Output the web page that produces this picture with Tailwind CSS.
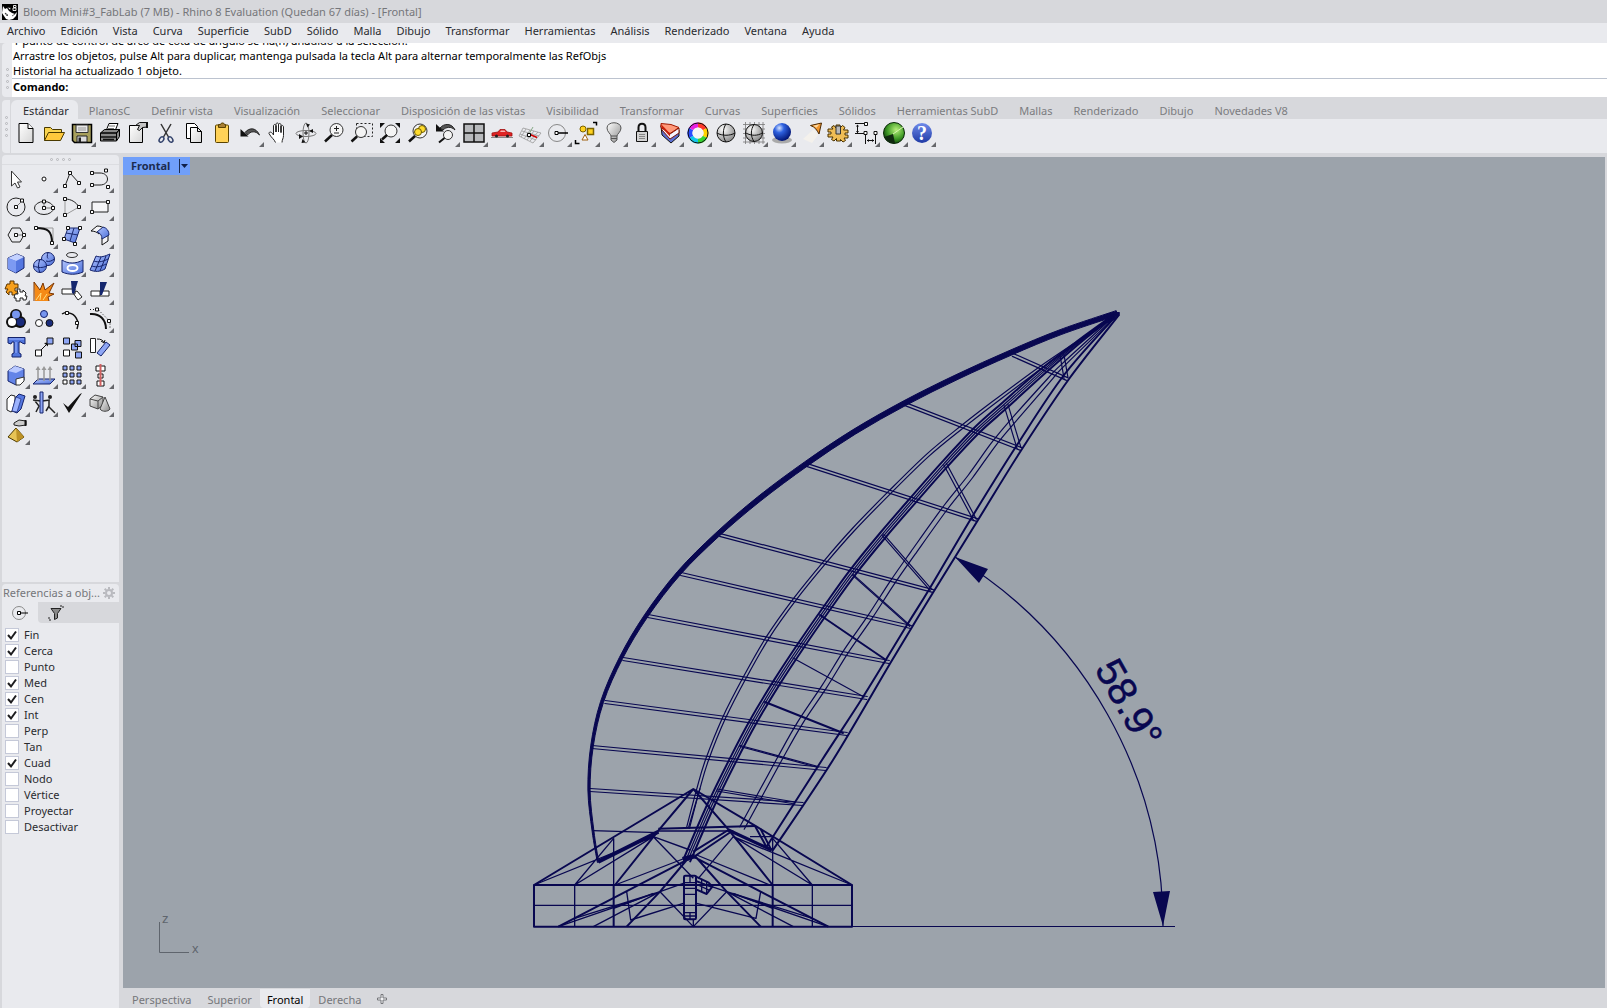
<!DOCTYPE html>
<html lang="es">

<head>
  <meta charset="UTF-8">
  <meta name="viewport" content="width=device-width, initial-scale=1.0">
  <script src="https://cdn.jsdelivr.net/npm/@tailwindcss/browser@4"></script>
  <title>Bloom Mini#3_FabLab - Rhino 8</title>
</head>

<body class="flex h-screen flex-col overflow-hidden bg-[#d7d8dc] font-['Noto_Sans','Open_Sans',sans-serif] text-[11px] leading-4 text-[#2a2b2e]">

  <!-- shared gradients -->
  <svg class="absolute size-0" aria-hidden="true">
    <defs>
      <linearGradient id="blue" x1="0" y1="0" x2="1" y2="1"><stop offset="0" stop-color="#b4c6ff"/><stop offset="1" stop-color="#4a6ed8"/></linearGradient>
      <linearGradient id="gray" x1="0" y1="0" x2="1" y2="1"><stop offset="0" stop-color="#fff"/><stop offset="1" stop-color="#8a8a8a"/></linearGradient>
      <linearGradient id="paper" x1="0" y1="0" x2="1" y2="1"><stop offset="0" stop-color="#fff"/><stop offset="1" stop-color="#d5d5d5"/></linearGradient>
      <linearGradient id="help" x1="0" y1="0" x2="0" y2="1"><stop offset="0" stop-color="#6f8bea"/><stop offset="1" stop-color="#1f3aa5"/></linearGradient>
      <radialGradient id="ball" cx=".35" cy=".3" r=".7"><stop offset="0" stop-color="#fff"/><stop offset="1" stop-color="#8f8f8f"/></radialGradient>
      <radialGradient id="blueball" cx=".35" cy=".28" r=".75"><stop offset="0" stop-color="#d6e4ff"/><stop offset=".35" stop-color="#2f62e0"/><stop offset="1" stop-color="#001270"/></radialGradient>
      <radialGradient id="greenball" cx=".6" cy=".35" r=".7"><stop offset="0" stop-color="#b6f07a"/><stop offset=".6" stop-color="#3f9a26"/><stop offset="1" stop-color="#0b3d08"/></radialGradient>
    </defs>
  </svg>

  <header>
    <div class="flex h-[23px] items-center gap-[5px] pl-[2px] text-[#75767a]">
      <svg class="size-4" viewBox="0 0 16 16">
        <path d="M0 0h16v16H0z" fill="#000"/>
        <path d="M1 2l2 3 2-1 2 3 3 2 3 1 2-2-1 4-3 3-4 1-3-1-2-3-2-3z" fill="#fff"/>
        <path d="M5 3l3 3 1-2zM3 9l3 2-1 1zM10 12l3-2" fill="#fff" stroke="#000" stroke-width=".6"/>
        <path d="M11.500 1.500h2.500v2h-2.500zM11 4h3v2.500h-3z" fill="none" stroke="#fff" stroke-width=".9"/>
      </svg>
      <h1>Bloom Mini#3_FabLab (7 MB) - Rhino 8 Evaluation (Quedan 67 días) - [Frontal]</h1>
    </div>
    <nav class="flex h-5 items-center gap-[15px] bg-[#e9eaee] pb-[5px] pl-[7px]">
      <a href="#">Archivo</a>
      <a href="#">Edición</a>
      <a href="#">Vista</a>
      <a href="#">Curva</a>
      <a href="#">Superficie</a>
      <a href="#">SubD</a>
      <a href="#">Sólido</a>
      <a href="#">Malla</a>
      <a href="#">Dibujo</a>
      <a href="#">Transformar</a>
      <a href="#">Herramientas</a>
      <a href="#">Análisis</a>
      <a href="#">Renderizado</a>
      <a href="#">Ventana</a>
      <a href="#">Ayuda</a>
    </nav>
  </header>

  <!-- command line -->
  <section class="ml-[2px] flex h-[54px] text-black">
    <div class="flex w-[10px] flex-col items-center justify-center gap-[3px] rounded-l bg-[#e9eaee] pt-4">
      <i class="size-[3px] rounded-full border border-[#b5b6ba]"></i><i class="size-[3px] rounded-full border border-[#b5b6ba]"></i><i class="size-[3px] rounded-full border border-[#b5b6ba]"></i><i class="size-[3px] rounded-full border border-[#b5b6ba]"></i>
    </div>
    <div class="flex flex-1 flex-col bg-white">
      <div class="flex h-9 flex-col justify-end overflow-hidden border-b border-[#bcc3cf] pl-px leading-[15px]">
        <p>1 punto de control de arco de cota de ángulo se ha(n) añadido a la selección.</p>
        <p>Arrastre los objetos, pulse Alt para duplicar, mantenga pulsada la tecla Alt para alternar temporalmente las RefObjs</p>
        <p>Historial ha actualizado 1 objeto.</p>
      </div>
      <div class="flex flex-1 items-center pb-[2px] pl-px">
        <label for="command" class="font-bold">Comando:</label>
        <input id="command" type="text" class="ml-1 h-4 flex-1 outline-none">
      </div>
    </div>
  </section>

  <!-- toolbar tabs + icons -->
  <section class="mt-[3px] ml-[2px] flex h-[53px]">
    <div class="flex w-[9px] flex-col items-center justify-center gap-[3px] rounded-l border-r border-[#d7d8dc] bg-[#e9eaee]">
      <i class="size-[3px] rounded-full border border-[#b5b6ba]"></i><i class="size-[3px] rounded-full border border-[#b5b6ba]"></i><i class="size-[3px] rounded-full border border-[#b5b6ba]"></i><i class="size-[3px] rounded-full border border-[#b5b6ba]"></i>
    </div>
    <div class="flex-1">
      <div class="flex h-[19px] items-center gap-[21px] text-[#7b7c80]">
        <button class="-mr-[10px] h-full rounded-t-md bg-[#e9eaee] pt-[2px] pr-[9px] pl-3 text-[#2a2b2e]">Estándar</button>
        <button class="pt-[2px]">PlanosC</button>
        <button class="pt-[2px]">Definir vista</button>
        <button class="pt-[2px]">Visualización</button>
        <button class="pt-[2px]">Seleccionar</button>
        <button class="pt-[2px]">Disposición de las vistas</button>
        <button class="pt-[2px]">Visibilidad</button>
        <button class="pt-[2px]">Transformar</button>
        <button class="pt-[2px]">Curvas</button>
        <button class="pt-[2px]">Superficies</button>
        <button class="pt-[2px]">Sólidos</button>
        <button class="pt-[2px]">Herramientas SubD</button>
        <button class="pt-[2px]">Mallas</button>
        <button class="pt-[2px]">Renderizado</button>
        <button class="pt-[2px]">Dibujo</button>
        <button class="pt-[2px]">Novedades V8</button>
      </div>
      <div id="toolbar" class="flex h-[34px] items-start bg-[#e9eaee] pl-px"></div>
    </div>
  </section>

  <div class="mt-[2px] flex min-h-0 flex-1">
    <aside class="ml-[2px] flex w-[117px] flex-col gap-[2px]">
      <div class="h-[427px] rounded-t bg-[#e9eaee]">
        <div class="flex h-[10px] items-center justify-center gap-[3px] border-b border-[#dcdde1]">
          <i class="size-[3px] rounded-full border border-[#b5b6ba]"></i><i class="size-[3px] rounded-full border border-[#b5b6ba]"></i><i class="size-[3px] rounded-full border border-[#b5b6ba]"></i><i class="size-[3px] rounded-full border border-[#b5b6ba]"></i>
        </div>
        <div id="palette" class="grid w-[112px] grid-cols-4"></div>
      </div>

      <div class="flex-1 rounded-t bg-[#e9eaee]">
        <div class="flex h-[18px] items-center justify-between pr-1 pl-px text-[#75767a]">
          <h2>Referencias a obj...</h2>
          <button aria-label="Opciones">
            <svg class="size-3" viewBox="0 0 12 12"><circle cx="6" cy="6" r="3" fill="none" stroke="#b9babf" stroke-width="2"/><path d="M6 0v2M6 10v2M0 6h2M10 6h2M1.700 1.700l1.500 1.500M8.800 8.800l1.500 1.500M1.700 10.300l1.500-1.500M8.800 3.200l1.500-1.500" stroke="#b9babf" stroke-width="2"/></svg>
          </button>
        </div>
        <div class="flex h-[21px] bg-[#e9eaee]">
          <button class="flex w-9 items-center justify-center" aria-label="Referencias">
            <svg class="size-[18px]" viewBox="0 0 18 18" fill="none"><circle cx="8" cy="9" r="6.500" stroke="#8a8a8a"/><path d="M9.500 9H17" stroke="#000"/><path d="M6.500 7.500h3v3h-3z" fill="#fff" stroke="#000"/></svg>
          </button>
          <div class="flex flex-1 rounded-bl bg-[#d7d8dc]">
            <button class="flex w-9 items-center justify-center" aria-label="Filtro de selección">
              <svg class="size-4" viewBox="0 0 16 16"><path d="M3 3.500h10l-3.500 5v4.500l-3 1.500v-6z" fill="#888" stroke="#222"/><path d="M12 1h3v3M1 12v3h3" fill="none" stroke="#222" stroke-dasharray="2 1"/></svg>
            </button>
          </div>
        </div>
        <ul id="snaps" class="mt-1 pl-[3px]"></ul>
      </div>
    </aside>

    <main class="ml-1 flex min-w-0 flex-1 flex-col">
      <div class="relative mt-[2px] mr-[2px] min-h-0 flex-1 bg-[#9ca3ab]">
        <svg id="viewport" class="size-full" viewBox="123 157 1482 831" preserveAspectRatio="xMidYMid meet" fill="none" stroke="#080750">
          <g id="model" stroke-linecap="round" stroke-linejoin="round"></g>

          <!-- base, drawn at 3:1 -->
          <g transform="translate(520 760) scale(.33333)" stroke-width="6" stroke-linejoin="round">
            <path d="M42 375H996V500H42zM281 375V500M758 375V500"/>
            <path d="M42 375L520 87L710 200L996 375M520 87L415 212L285 375M520 87L625 208L758 375"/>
            <path d="M415 206L705 198M115 500L520 290L925 500M500 300L420 395L320 500M525 288L620 395L722 500"/>
            <path d="M625 210L520 275M632 216L525 288M705 198L740 262M722 207L755 272"/>
            <path d="M235 305L415 215" stroke-width="12"/>
            <path d="M625 210L755 270" stroke-width="10"/>
            <path d="M488 298L525 288" stroke-width="14"/>
            <g stroke-width="4">
              <path d="M42 436H996M164 375V500M877 375V500M281 235V375M758 232V375M415 213H640M218 212L415 218M690 230H755"/>
              <path d="M42 375L400 230L164 375L281 235M996 375L640 230L877 375L758 235"/>
              <path d="M400 230L520 355M640 230L535 355M400 230L510 270M520 285L285 375M530 285L750 375"/>
              <path d="M420 395L220 500M420 395L164 475M420 395L115 500M420 395L520 500L620 395M420 395L490 370M530 365L620 395M620 395L820 500M620 395L877 475M620 395L925 500"/>
              <path d="M320 395L332 480L490 430M722 395L708 475L530 430M281 445L400 400M758 445L640 400M505 205L540 85"/>
              <path d="M493 368H528M493 385H528M493 403H528M493 458H528M510 347V368M510 458V478M493 468H528M520 478V500M528 362L576 382M528 372L570 392M545 357V394M560 364V400"/>
            </g>
            <rect x="492" y="347" width="36" height="131" rx="4"/>
            <path d="M528 350L566 368L577 380L560 402L528 388z"/>
          </g>

          <!-- angle dimension -->
          <path d="M852 926.500H1175"/>
          <path d="M955 557A431 431 0 0 1 1163 926" stroke-width="1.200"/>
          <path d="M955 557L988 569L979 583zM1163 926L1153 892L1170 891z" fill="#080750" stroke="none"/>
          <text transform="translate(1094 669) rotate(60.500)" class="font-['Liberation_Sans',sans-serif] text-[40px]" fill="#080750" stroke-width=".5">58.9°</text>

          <!-- axis icon -->
          <path d="M159.500 922V952.500H189" stroke="#5f656d"/>
          <g class="font-['Liberation_Sans',sans-serif] text-[13px]" fill="#5f656d" stroke="none">
            <text x="162" y="923">z</text>
            <text x="192" y="953">x</text>
          </g>
        </svg>
        <button class="absolute top-0 left-0 flex h-[18px] items-center bg-[#709ffa] font-bold text-[#1c2c50]">
          <span class="w-[57px] border-r border-[#1c2c50] pl-2 text-left leading-[14px]">Frontal</span>
          <svg class="w-[10px]" viewBox="0 0 10 10"><path d="M1 3h7l-3.500 4z" fill="#10204a"/></svg>
        </button>
      </div>
      <div class="mt-px flex h-[19px] items-center pl-px text-[#75767a]">
        <button class="px-2 pt-[2px]">Perspectiva</button>
        <button class="px-2 pt-[2px]">Superior</button>
        <button class="h-full rounded-b bg-[#e9eaee] px-[7px] pt-[2px] text-black">Frontal</button>
        <button class="px-2 pt-[2px]">Derecha</button>
        <button class="px-2 pt-px" aria-label="Nueva vista">
          <svg class="size-[10px]" viewBox="0 0 10 10"><path d="M4 .5h2v3.500h3.500v2H6v3.500H4V6H.5V4H4z" fill="#f4f4f6" stroke="#75767a"/></svg>
        </button>
      </div>
    </main>
  </div>

  <script>
    // [label, has flyout, svg content]
    const toolbar = [
      ['Nuevo', 0, '<path d="M5 2.500h9l5 5v14H5z" fill="url(#paper)" stroke="#000"/><path d="M14 2.500v5h5" fill="#fff" stroke="#000"/>'],
      ['Abrir', 0, '<path d="M2.500 19.500v-13h6l2 2h9v3" fill="#f9d44f" stroke="#4a3a00"/><path d="M2.500 19.500l4-8h16l-4 8z" fill="#ffc93c" stroke="#4a3a00"/>'],
      ['Guardar', 1, '<path d="M2.500 3.500h19v18H4.500l-2-2z" fill="#a8a05c" stroke="#000" stroke-width="1.500"/><path d="M6 4h12v7.500H6z" fill="#e8e8e8" stroke="#333"/><path d="M7 15h10v6H7z" fill="#ddd" stroke="#222"/><path d="M8.500 16.500h2.500V21H8.500z" fill="#222"/><path d="M8 7h8M8 9h8" stroke="#999"/>'],
      ['Imprimir', 0, '<path d="M8 10l3-7.500h9L17 10z" fill="#fff" stroke="#000"/><path d="M11 5h6M10 7.500h6" stroke="#777"/><path d="M2.500 12l4-3.500h15l-3 3.500zM2.500 12h16v8h-16zM18.500 12l3-3.500v7l-3 4.500z" fill="#888" stroke="#000"/><path d="M3 16h15M5 18.500h11" stroke="#111" stroke-width="1.500"/>'],
      ['Propiedades', 0, '<path d="M3.500 4.500h13v17h-13z" fill="url(#paper)" stroke="#000"/><path d="M9.500 4.500l4-3h8v4.500l-5 .5-3 3-2-1 2-4z" fill="#c4c4c4" stroke="#111"/><path d="M21 1v6" stroke="#111" stroke-width="2"/>'],
      ['Cortar', 0, '<path d="M7 3l7.500 13M17 3L9.500 16" stroke="#333" stroke-width="1.500"/><ellipse cx="7.500" cy="18.500" rx="2" ry="3" fill="none" stroke="#33436c" stroke-width="1.500" transform="rotate(35 7.500 18.500)"/><ellipse cx="16.500" cy="18.500" rx="2" ry="3" fill="none" stroke="#33436c" stroke-width="1.500" transform="rotate(-35 16.500 18.500)"/>'],
      ['Copiar', 0, '<path d="M4.500 2.500h8l3 3v12h-11z" fill="#fff" stroke="#000"/><path d="M8.500 6.500h7l4 4v11h-11z" fill="url(#paper)" stroke="#000"/><path d="M15.500 6.500v4h4" fill="none" stroke="#000"/>'],
      ['Pegar', 0, '<rect x="5.500" y="4" width="13" height="17.500" rx="1" fill="#ffd257" stroke="#5a4300"/><path d="M8.500 3.500h2l1-1.500h2l1 1.500h1v3h-7z" fill="#a87f33" stroke="#5a4300"/>'],
      ['Deshacer', 1, '<path d="M7 11.500C11 6.500 18 6 21.500 14c-4-4.500-9-4-12 0z" fill="#555" stroke="#222"/><path d="M2.500 8v7.500h8z" fill="#111"/>'],
      ['Encuadrar', 0, '<path d="M9.500 21.500c-1-3-4.500-5-6.500-9 0-2.500 3-1.500 4.500 1.500V5c0-2 2.500-2 2.500 0v6-7.500c0-2 2.500-2 2.500 0V11 4c0-2 2.500-2 2.500 0v7.500V6c0-2 2.500-2 2.500 0v8.500c0 3-1.500 4-1.500 7" fill="#fff" stroke="#222"/><path d="M10 5v6M12.500 4v7M15 5v6.500" stroke="#222"/>'],
      ['Rotar vista', 0, '<ellipse cx="12" cy="12.500" rx="10" ry="3" fill="none" stroke="#777"/><ellipse cx="12" cy="12" rx="3" ry="10" fill="none" stroke="#777"/><path d="M12 10v4M10 12h4" stroke="#111"/><path d="M5 13l4 2.500-4 2.500zM19 8l-4 2 4 2zM12 2.500l4 1-2.500 3zM8.500 18l3 3.500-4 .5z" fill="#111"/>'],
      ['Zoom', 0, '<circle cx="14.500" cy="9" r="6.500" fill="#f4f4f4" stroke="#333"/><path d="M10 14l-7 6.500" stroke="#111" stroke-width="2.500"/><path d="M12 7.500h5M14.500 5v5M12 12h5" stroke="#222"/>'],
      ['Zoom ventana', 0, '<path d="M6.500 2.500h16v13h-16z" fill="none" stroke="#222" stroke-dasharray="2 2"/><circle cx="11" cy="11" r="5.500" fill="#f4f4f4" stroke="#333"/><path d="M7 15.500l-5.500 5" stroke="#111" stroke-width="2.500"/>'],
      ['Zoom extensión', 0, '<circle cx="13" cy="10" r="6" fill="#f4f4f4" stroke="#333"/><path d="M9 14l-5 4.500" stroke="#111" stroke-width="2.500"/><path d="M2 2h5L2 7zM22 2h-5l5 5zM2 22h5l-5-5zM22 22h-5l5-5z" fill="#111"/>'],
      ['Zoom seleccionado', 0, '<circle cx="14" cy="10" r="7" fill="#f4f4f4" stroke="#333"/><circle cx="16" cy="8" r="3.500" fill="#ffdc2e" stroke="#6b5a00"/><circle cx="12" cy="11" r="3.500" fill="#ffdc2e" stroke="#6b5a00"/><path d="M9 15l-6 5.500" stroke="#111" stroke-width="2.500"/>'],
      ['Deshacer vista', 1, '<path d="M6 7C10 2 18 2 21 9c-4-4-9-3-12 0z" fill="#555" stroke="#222"/><path d="M2 3v7.500h8z" fill="#111"/><circle cx="14" cy="14" r="4.500" fill="#f4f4f4" stroke="#333"/><path d="M10.500 17L5 21.500" stroke="#111" stroke-width="2"/>'],
      ['Vistas', 1, '<path d="M2 3h20v18H2z" fill="#b8babd" stroke="#111" stroke-width="1.500"/><path d="M12 3v18M2 12h20" stroke="#111" stroke-width="1.500"/>'],
      ['Vista derecha', 1, '<path d="M1 16.500h22" stroke="#888"/><path d="M2 12l6-1 2-2.500h5l2 2.500 5 1v3H2z" fill="#e02424" stroke="#a01010" stroke-width=".8"/><path d="M10 11l1-1.500h3.500l1 1.500z" fill="#f4b5b5"/><circle cx="6.500" cy="15" r="1.500" fill="#222"/><circle cx="17.500" cy="15" r="1.500" fill="#222"/>'],
      ['Plano de construcción', 1, '<path d="M5 7l18 5-8 10L1 15zM8 8l-5 8M12 9l-6 9M16 10l-7 9M20 11l-8 9M4 10l17 5M2 13l16 6" fill="none" stroke="#999" stroke-width=".8"/><path d="M12 13.500l7 3" stroke="#d00000" stroke-width="1.500"/><path d="M11 13l4-7" stroke="#8a8"/><path d="M9.500 12.500h3v3h-3z" fill="#fff" stroke="#000"/>'],
      ['Referencias a objetos', 1, '<circle cx="11" cy="12" r="8.500" fill="none" stroke="#888"/><path d="M12 12h10" stroke="#000" stroke-width="1.500"/><path d="M9 10.500h3v3H9z" fill="#fff" stroke="#000"/>'],
      ['Seleccionar', 1, '<path d="M19 1.500h3.500v3M1.500 19v3.500h4" fill="none" stroke="#000" stroke-width="1.500"/><circle cx="9" cy="8" r="3" fill="#ffd21f" stroke="#7a6200"/><path d="M13.500 7.500h6v6h-6z" fill="#ffd21f" stroke="#7a6200" stroke-width="1.500"/><path d="M11 13.500l3 5.500H8z" fill="#fff" stroke="#a06010"/>'],
      ['Ocultar', 1, '<path d="M9 15c0-2-4-4-4-8 0-7 14-7 14 0 0 4-4 6-4 8v4l-3 2.500L9 19z" fill="url(#gray)" stroke="#555"/><path d="M9 15h6M9 17.500h6" stroke="#555"/>'],
      ['Bloquear', 1, '<path d="M8.500 11V6.500c0-5 7-5 7 0V11" fill="none" stroke="#111" stroke-width="2"/><path d="M6.500 10.500h11v10h-11z" fill="#d3d3d3" stroke="#111"/><path d="M9 13.500h6M9 15.500h6M9 17.500h6" stroke="#888"/>'],
      ['Capas', 1, '<path d="M3 5l9 11 9-7v6l-8 7L4 14z" fill="#5b6fd0" stroke="#111"/><path d="M3 4l9 9 9-6v5l-9 6-8-9z" fill="#f6f6ff" stroke="#7a1200"/><path d="M3 2.500l10 1 8 3-9 6-9-6z" fill="#ff9a7a" stroke="#a01800"/><path d="M3 3l9 9.500v3L4 7z" fill="#c9200a"/>'],
      ['Color', 1, '<g fill="none" stroke-width="5"><path d="M12 4a8 8 0 0 1 7 4" stroke="#ff3a2a"/><path d="M19 8a8 8 0 0 1 0 8" stroke="#ffd300"/><path d="M19 16a8 8 0 0 1-7 4" stroke="#35d430"/><path d="M12 20a8 8 0 0 1-7-4" stroke="#10c8e8"/><path d="M5 16a8 8 0 0 1 0-8" stroke="#2a4cff"/><path d="M5 8a8 8 0 0 1 7-4" stroke="#e820e0"/></g><circle cx="12" cy="12" r="10" fill="none" stroke="#111"/><circle cx="12" cy="12" r="5.500" fill="#f5f5f5"/>'],
      ['Sombrear', 0, '<circle cx="12" cy="12" r="9" fill="url(#ball)" stroke="#111"/><path d="M12 3c-3.500 5-3.500 13 0 18M3 12c5 3 13 3 18 0" fill="none" stroke="#111"/>'],
      ['Vista previa', 1, '<path d="M1 3.500h22M1 8h22M1 12.500h22M1 17h22M1 21h22M3.500 1v22M8 1v22M12.500 1v22M17 1v22M21 1v22" stroke="#777" stroke-width=".8"/><circle cx="12" cy="12" r="8.500" fill="url(#ball)" stroke="#111"/><path d="M12 3.500c-3.500 5-3.500 12 0 17M4 12c5 3 12 3 16 0" fill="none" stroke="#111"/>'],
      ['Renderizar', 1, '<ellipse cx="12" cy="19" rx="10" ry="3.500" fill="#aaa"/><circle cx="12" cy="11" r="9" fill="url(#blueball)"/>'],
      ['Luces', 1, '<path d="M16 8L5 18l9 4 6-8z" fill="#f4f1ec"/><path d="M12.500 4.500l11-2.500-2.500 11c-2-4-4-7-8.500-8.500z" fill="#f0952c" stroke="#4a2800"/><path d="M15 4.800l6.500-1.500-3 3.500z" fill="#ffd9a0"/>'],
      ['Opciones', 1, '<path d="M10 7V4h4v3l2.500-2.500 2.500 2-1.500 2.500H22v3h-3v2h3v3h-4l1.500 2.500-2.500 1.500-2.500-2.500V20h-4v-2.500L8 20l-2.500-1.500L7 16H2v-3h3v-2H2V8h5L5.500 6 8 4.500z" fill="#f0bd55" stroke="#4a3200"/><path d="M10 5h4.500v8H10z" fill="#b8b8b8" stroke="#333"/>'],
      ['Acotar', 1, '<path d="M1 2.500h13M1 12.500h11M3.500 4v8M11.500 14v9M21.500 14v9M13 19.500h7" fill="none" stroke="#111"/><path d="M2 5.500l1.500-2L5 5.500zM2 10l1.500 2L5 10zM15 18l-2 1.500 2 1.500zM18 18l2 1.500-2 1.500z" fill="#111"/><path d="M10.500 1.500h3v3h-3zM10 10.500h3v3h-3zM20 10.500h3v3h-3z" fill="#fff" stroke="#111"/>'],
      ['Grasshopper', 1, '<circle cx="12" cy="12" r="10.500" fill="url(#greenball)" stroke="#0a2a08"/><path d="M2 16l9-3 2 9c-5 1-9-2-11-6z" fill="#102a10"/><path d="M11 13l10-7" stroke="#d6f5b0"/>'],
      ['Ayuda', 1, '<circle cx="12" cy="12" r="10" fill="url(#help)"/><text x="12" y="19" text-anchor="middle" font-family="Liberation Serif, serif" font-weight="bold" font-size="20" fill="#fff">?</text>']
    ];

    const sq = (x, y) => `<path d="M${x - 1.5} ${y - 1.5}h3v3h-3z" fill="#fff" stroke="#111"/>`;

    const palette = [
      ['Cancelar', 0, '<path d="M7.500 4v15l3.500-3 2.500 5 2.500-1-2.500-5h4z" fill="#fff" stroke="#333"/>'],
      ['Punto', 1, '<circle cx="12" cy="12" r="2" fill="#fff" stroke="#111"/>'],
      ['Polilínea', 1, '<path d="M5 19L10 6l9 10" fill="none" stroke="#222"/>' + sq(5, 19) + sq(10, 6) + sq(19, 16)],
      ['Curva', 1, '<path d="M4 6h8c10 0 10 12 0 12H4" fill="none" stroke="#222"/>' + sq(4, 6) + sq(4, 18) + sq(18, 3.5) + sq(20, 20)],
      ['Círculo', 1, '<circle cx="12" cy="12" r="9" fill="none" stroke="#222"/><path d="M12 12l6-6" stroke="#777"/>' + sq(12, 12) + sq(18, 5.5)],
      ['Elipse', 1, '<ellipse cx="12" cy="13" rx="9.500" ry="6.500" fill="none" stroke="#222"/><path d="M12 7v6h9" fill="none" stroke="#777"/>' + sq(12, 6.5) + sq(12, 13) + sq(21, 13)],
      ['Arco', 1, '<path d="M5 20V4M5 20l14-8" fill="none" stroke="#999"/><path d="M5 4c6 0 11 3 14 8" fill="none" stroke="#222"/>' + sq(5, 4) + sq(5, 20) + sq(19, 12)],
      ['Rectángulo', 1, '<path d="M4 7h16v10H4z" fill="#f4f4f6" stroke="#222"/>' + sq(4, 17) + sq(20, 7)],
      ['Polígono', 1, '<path d="M8 5h8l4 7-4 7H8l-4-7z" fill="none" stroke="#222"/><path d="M12 12h8" stroke="#777"/>' + sq(12, 12) + sq(20, 12)],
      ['Empalme', 1, '<path d="M4 5h17v15" fill="none" stroke="#999"/><path d="M4 5c12 0 16 3 16 15" fill="none" stroke="#111" stroke-width="2"/>' + sq(4, 5) + sq(20, 20)],
      ['Superficie', 1, '<path d="M8 5h12l-5 15-11-4z" fill="url(#blue)" stroke="#1a2a70"/><path d="M14 5l-4 13M6 10l12 2" stroke="#1a2a70"/>' + sq(8, 5) + sq(20, 5) + sq(4, 16) + sq(15, 21)],
      ['Extruir', 1, '<path d="M3 8l6-5c3 0 6 1 8 3l-6 5c-2-2-5-3-8-3z" fill="#f4f4f6" stroke="#111"/><path d="M14 15l6-4v7l-6 4z" fill="#f4f4f6" stroke="#111"/><path d="M9 9l6-5c4 1 6 4 6 8l-7 4c0-4-2-6-5-7z" fill="url(#blue)" stroke="#1a2a70"/>'],
      ['Caja', 1, '<path d="M4 7l9-4 7 3v11l-8 5-8-4z" fill="#5577e0" stroke="#14226a"/><path d="M4 7l9-4 7 3-8 4z" fill="#c4d2ff"/><path d="M4 7l8 3v12l-8-4z" fill="#7d9af2"/>'],
      ['Booleana', 1, '<circle cx="16" cy="8" r="6.500" fill="url(#blue)" stroke="#14226a"/><circle cx="8" cy="15" r="6.500" fill="url(#blue)" stroke="#14226a"/><path d="M8 8.500c-2 4-2 9 0 13M2 15c4 2 9 2 12.500 0M16 1.500c-1 3-1 5 0 6M14 10c3 1 6 0 8-2" fill="none" stroke="#14226a"/>'],
      ['Proyectar', 1, '<ellipse cx="12" cy="4" rx="5.500" ry="2.500" fill="none" stroke="#333"/><path d="M2 9c6 4 14 4 21 0v12c-7 3-14 3-21 0z" fill="url(#blue)" stroke="#14226a"/><ellipse cx="12.500" cy="17" rx="5" ry="3" fill="none" stroke="#fff" stroke-width="2"/>'],
      ['Malla', 1, '<path d="M8 5c5 2 9 0 14-2l-5 15c-5 3-10 3-15 1z" fill="url(#blue)" stroke="#14226a"/><path d="M13 6L7 20M18 5l-6 15M6 10c5 2 10 0 14-2M4 15c5 2 10 0 14-2" fill="none" stroke="#14226a"/>'],
      ['Unir', 1, '<path d="M3 5h3V2h4v3h4v4h-3v3h3l-2 4H8v-3H5v3L2 13l2-3H1z" fill="#f7a01c" stroke="#5a3400"/><path d="M13 10h3v3h3v-2l3 3-1 3h2l-1 4h-3v-2h-3v3h-4v-3h-2l1-4h3z" fill="#fff" stroke="#222"/>'],
      ['Descomponer', 0, '<path d="M2 3l6 8 3-7 2 7 9-7-5 10 5 1-6 3 1 4H3z" fill="#f58a16"/><path d="M2 22V3l6 8 3-7 2 7 9-7-5 10 5 1-6 3 1 4" fill="none" stroke="#7a3400"/><path d="M4 21l5-7-1 7M11 21l4-6" stroke="#ffdf80" fill="none"/>'],
      ['Recortar', 1, '<path d="M2 10h13v5H2zM13 14l4-2 5 6-4 3z" fill="#fff" stroke="#222"/><path d="M11 2h7l-4 13-2-1z" fill="#14266e"/>'],
      ['Partir', 1, '<path d="M3 12h18v5H3zM12 12v5" fill="#fff" stroke="#222"/><path d="M12 3h7l-5 13h-2z" fill="#14266e"/>'],
      ['Agrupar', 1, '<circle cx="12" cy="8" r="6" fill="#111"/><circle cx="8" cy="15" r="6" fill="#111"/><circle cx="16" cy="15" r="6" fill="#111"/><circle cx="12" cy="7.500" r="4" fill="#7796f0"/><circle cx="8" cy="15" r="4" fill="#fff"/><circle cx="16.500" cy="15" r="4" fill="#1a2c7c"/>'],
      ['Desagrupar', 0, '<circle cx="12" cy="7" r="3.500" fill="#7796f0" stroke="#14226a"/><circle cx="7" cy="16" r="3.500" fill="#fff" stroke="#222"/><circle cx="17.500" cy="16" r="3.500" fill="#1a2c7c" stroke="#111"/>'],
      ['Editar puntos', 0, '<path d="M2 7c3-2 5-2 7-1 6 1 11 8 8 16" fill="none" stroke="#111" stroke-width="1.500"/>' + sq(7, 6) + sq(17, 16)],
      ['Puntos de control', 1, '<path d="M2 7c10-1 16 6 16 15" fill="none" stroke="#111" stroke-width="2"/><path d="M2 2.500h8l12 12v8" fill="none" stroke="#111" stroke-dasharray="1 2"/>' + sq(9, 2.5) + sq(21, 14)],
      ['Texto', 0, '<path d="M4 2.500h17v6.500l-3-1-1-1h-2v11l2 1v3H8v-3l2-1V7H8l-1 2-3-1z" fill="#4f74dc" stroke="#14226a"/><path d="M5 4h15M12 7v11" stroke="#9db4ff"/>'],
      ['Mover', 1, '<path d="M9 15l6-6" stroke="#111"/><path d="M16 7.500v4L12 8z" fill="#111"/><path d="M15 3h6v6h-6z" fill="#8ea6f5" stroke="#111"/><path d="M3.500 15h6v6h-6z" fill="#fff" stroke="#111"/>'],
      ['Copiar', 0, '<path d="M3.500 3h6v6h-6zM15 5.500h6v6h-6zM11.500 9h6v6h-6zM15.500 17h6v6h-6z" fill="#8ea6f5" stroke="#111"/><path d="M3.500 15h6v6h-6z" fill="#fff" stroke="#111"/>'],
      ['Rotar', 0, '<path d="M2.500 3.500h5v14h-5z" fill="#fff" stroke="#222"/><path d="M18 7l4 3-9 11-4-3z" fill="#8ea6f5" stroke="#14226a"/><path d="M9 4c4 0 6 1 7 4M13 6l3 2 1-3" fill="none" stroke="#111"/>'],
      ['Escala', 1, '<path d="M4 8l7-5 9 3v11l-8 5-8-4z" fill="#6384e8" stroke="#14226a"/><path d="M4 8l7-5 9 3-8 4z" fill="#b9c9ff"/><path d="M12 16l4-1 4-1v4l-4 4h-4z" fill="#fff" stroke="#333"/>'],
      ['Aplanar', 1, '<path d="M6 16h17l-5 5H1z" fill="url(#blue)" stroke="#14226a"/><path d="M6 18V5M12 18V5M18 18V5" stroke="#999" stroke-width="1.500"/><path d="M3.500 7L6 3l2.500 4zM9.500 7L12 3l2.500 4zM15.500 7L18 3l2.500 4z" fill="#999"/>'],
      ['Matriz', 1, '<path d="M3 3h4v4H3zM10 3h4v4h-4zM17 3h4v4h-4zM3 10h4v4H3zM10 10h4v4h-4zM17 10h4v4h-4zM10 17h4v4h-4zM17 17h4v4h-4z" fill="#8ea6f5" stroke="#111"/><path d="M3 17h4v4H3z" fill="#fff" stroke="#111"/>'],
      ['Alinear', 1, '<path d="M8 3h9v5H8zM10 11h5v4h-5zM9 18h7v5H9z" fill="#fff" stroke="#111"/><path d="M12.500 1v22" stroke="#d06060" stroke-width="2"/>'],
      ['Bordes', 1, '<path d="M3 8l4-4 4 1v13l-4 3-4-2z" fill="#fff" stroke="#222"/><path d="M12 6l3-3 6 2-4 13-4 4-5-2z" fill="#5577e0" stroke="#14226a"/><path d="M12 6l5 2-4 13-5-1z" fill="#9db4ff" stroke="#14226a" stroke-width=".6"/>'],
      ['Analizar', 1, '<circle cx="3" cy="6" r="2" fill="#222"/><circle cx="18" cy="6" r="2" fill="#222"/><path d="M1 9l8 1M3 10l4 5-3 6M18 9l-8 1M17 10v6l6 6M14 20l3-5" stroke="#222" fill="none" stroke-width="1.500"/><path d="M8 1h3v21H8z" fill="#8ea6f5" stroke="#14226a"/>'],
      ['Comprobar', 1, '<path d="M3 12l5 4L20 3l2-1L9 22z" fill="#111"/>'],
      ['Sólidos', 1, '<path d="M2 8l5-4 8 2v8l-5 4-8-3z" fill="url(#gray)" stroke="#444"/><path d="M2 8l8 2 5-4M10 10v8" stroke="#444" fill="none"/><path d="M17 6l5 12c-2 3-8 3-10 0z" fill="url(#gray)" stroke="#444"/>'],
      ['Propiedades', 1, '<path d="M4 18l8-9 8 9-7 5z" fill="#e8c455" stroke="#4a3800"/><path d="M12 9l1 14 7-5z" fill="#bd9226"/><path d="M10 4l5-3 7 1v4l-7 1-5-1z" fill="#ccc" stroke="#222"/><path d="M21.500 1v6" stroke="#111" stroke-width="2"/>']
    ];

    function toolButton([label, flyout, art]) {
      return `<button class="relative flex size-7 shrink-0 items-center justify-center" title="${label}" aria-label="${label}">
        <svg class="size-6" viewBox="0 0 24 24" fill="none">${art}</svg>
        ${flyout ? '<svg class="absolute right-0 bottom-0 size-[5px]" viewBox="0 0 5 5"><path d="M5 0v5H0z" fill="#66676b"/></svg>' : ''}
      </button>`;
    }
    document.getElementById('toolbar').innerHTML = toolbar.map(toolButton).join('');
    document.getElementById('palette').innerHTML = palette.map(toolButton).join('');

    // object snaps
    const snaps = [['Fin', 1], ['Cerca', 1], ['Punto', 0], ['Med', 1], ['Cen', 1], ['Int', 1], ['Perp', 0], ['Tan', 0], ['Cuad', 1], ['Nodo', 0], ['Vértice', 0], ['Proyectar', 0], ['Desactivar', 0]];
    document.getElementById('snaps').innerHTML = snaps.map(([name, on]) => `
      <li><label class="flex h-4 items-center gap-[5px]">
        <span class="grid size-[14px]">
          <input type="checkbox" ${on ? 'checked' : ''} class="peer col-start-1 row-start-1 size-[14px] appearance-none border border-[#c5c9d8] bg-white">
          <svg class="pointer-events-none invisible col-start-1 row-start-1 size-[14px] peer-checked:visible" viewBox="0 0 14 14"><path d="M3 7l3 3.500L11 3.500" fill="none" stroke="#1c1c1e" stroke-width="2"/></svg>
        </span>${name}</label></li>`).join('');

    // wing curves, all running from the base up to the tip
    const edge = [[598, 862], [593, 831], [589, 790], [592, 746], [602, 702], [621, 658], [646, 616], [679, 573], [717, 535], [759, 499], [806, 464], [854, 432], [905, 403], [957, 377], [1010, 353], [1061, 332], [1117, 313]];
    const rib = [[688, 828], [698, 790], [707, 760], [724, 718], [745, 677], [768, 637], [795, 599], [825, 562], [853, 530], [890, 492], [928, 455], [962, 427], [993, 403], [1040, 368], [1080, 340], [1115, 315]];
    const spine = [[687, 860], [710, 807], [733, 760], [753, 722], [777, 682], [802, 644], [827, 608], [853, 572], [883, 535], [915, 498], [945, 464], [977, 430], [1005, 405], [1042, 372], [1080, 341], [1116, 314]];
    const inner = [[742, 828], [779, 760], [800, 723], [824, 687], [847, 650], [870, 617], [892, 583], [913, 553], [946, 507], [970, 477], [993, 445], [1012, 422], [1049, 380], [1062, 366], [1114, 317]];
    const backA = [[767, 846], [822, 760], [863, 697], [907, 625], [930, 588], [972, 517], [1017, 445], [1064, 375], [1115, 317]];
    const backB = [[773, 850], [833, 760], [891, 662], [934, 591], [978, 520], [1022, 449], [1069, 379], [1119, 315]];

    // cross members: from, to, gap between the two lines, stroke width
    const bars = [
      [1013, 355, 1067, 379, 3, 1], [905, 404, 1021, 449, 3, 1], [807, 465, 977, 520, 3, 1], [720, 535, 933, 591, 3, 1],
      [681, 574, 911, 627, 3, 1], [648, 616, 889, 662, 3, 1], [623, 659, 867, 698, 3, 1], [605, 702, 847, 734, 3, 1],
      [592, 747, 826, 769, 3, 1], [590, 790, 803, 804, 3, 1],
      [1062, 355, 1066, 378, 4, 1], [1006, 405, 1019, 448, 4, 1], [945, 464, 975, 520, 3, 1], [883, 535, 931, 590, 2, 1],
      [853, 575, 910, 626, 1, 1], [820, 615, 886, 660, 0, 2], [793, 658, 864, 697, 0, 1], [765, 702, 843, 733, 0, 2],
      [740, 746, 818, 767, 1, 1], [717, 790, 795, 803, 2, 1]
    ];

    // shift a curve sideways, closing up towards the tip
    function shift(pts, d) {
      return pts.map(([x, y], i) => {
        const a = pts[Math.max(i - 1, 0)], b = pts[Math.min(i + 1, pts.length - 1)];
        const dx = b[0] - a[0], dy = b[1] - a[1], len = Math.hypot(dx, dy);
        const k = d * Math.min(1, Math.max(0.2, (1118 - x) / 90));
        return [x - dy / len * k, y + dx / len * k];
      });
    }

    function smooth(pts) {
      let d = `M${pts[0]}`;
      for (let i = 0; i < pts.length - 1; i++) {
        const p0 = pts[i - 1] || pts[i], p1 = pts[i], p2 = pts[i + 1], p3 = pts[i + 2] || p2;
        d += `C${p1[0] + (p2[0] - p0[0]) / 6} ${p1[1] + (p2[1] - p0[1]) / 6} ${p2[0] - (p3[0] - p1[0]) / 6} ${p2[1] - (p3[1] - p1[1]) / 6} ${p2[0]} ${p2[1]}`;
      }
      return d;
    }

    // the outer edge thickens from the base upwards, so it is a filled outline
    function tapered(pts) {
      const side = s => pts.map(([x, y], i) => {
        const a = pts[Math.max(i - 1, 0)], b = pts[Math.min(i + 1, pts.length - 1)];
        const dx = b[0] - a[0], dy = b[1] - a[1], len = Math.hypot(dx, dy);
        const w = s * Math.min(2.5, 0.7 + i * 0.2);
        return [x - dy / len * w, y + dx / len * w];
      });
      return smooth(side(1)) + smooth(side(-1).reverse()).replace('M', 'L') + 'z';
    }

    const path = (d, w) => `<path d="${d}" stroke-width="${w === 1 ? 1.2 : w}"/>`;
    let art = `<path d="${tapered(edge)}" fill="#080750"/>`;
    art += path(smooth(shift(rib, -1.5)), 1) + path(smooth(shift(rib, 1.5)), 1);
    art += path(smooth(shift(spine, -3.5)), 2) + path(smooth(shift(spine, 3.5)), 2);
    art += path(smooth(shift(spine, -1)), 1) + path(smooth(shift(spine, 1)), 1);
    art += path(smooth(shift(inner, -2.5)), 1) + path(smooth(shift(inner, 2.5)), 1);
    art += path(smooth(backA), 2) + path(smooth(backB), 2);
    for (const [x1, y1, x2, y2, gap, w] of bars) {
      const len = Math.hypot(x2 - x1, y2 - y1);
      const nx = -(y2 - y1) / len * gap / 2, ny = (x2 - x1) / len * gap / 2;
      art += path(`M${x1 + nx} ${y1 + ny}L${x2 + nx} ${y2 + ny}`, w);
      if (gap) art += path(`M${x1 - nx} ${y1 - ny}L${x2 - nx} ${y2 - ny}`, w);
    }
    art += path('M1105 316L1113 313H1119L1116 318L1108 322z', 2);
    document.getElementById('model').innerHTML = art;
  </script>
</body>

</html>
